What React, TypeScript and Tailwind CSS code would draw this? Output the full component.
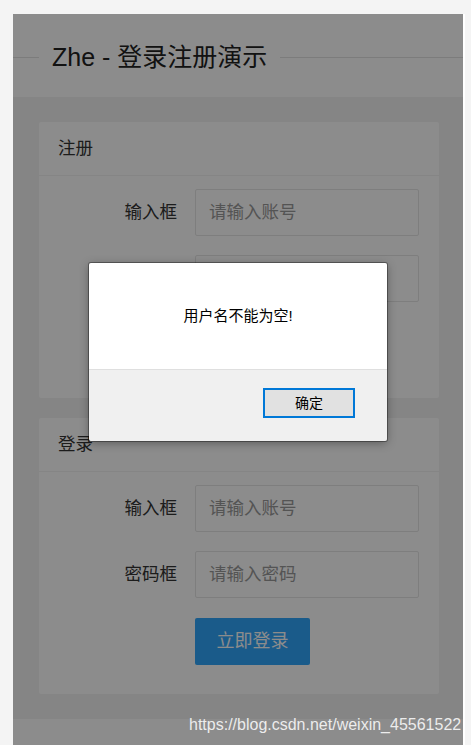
import React from "react";

const FONT = { fontFamily: '"Liberation Sans", "Noto Sans CJK SC", sans-serif' };

function Row({ label, placeholder }: { label: string; placeholder: string }) {
  return (
    <div className="flex items-center">
      <div className="w-[138px] text-right text-[17.5px] text-[#333]">{label}</div>
      <div className="ml-[18px] w-[224px] h-[47px] border border-[#e6e6e6] rounded-[2px] bg-white flex items-center pl-[13px] text-[17.5px] text-[#999]">
        {placeholder}
      </div>
    </div>
  );
}

function Card({ title, rows, button }: { title: string; rows: [string, string][]; button: string }) {
  return (
    <div className="w-[400px] ml-[26px] bg-white rounded-[2px] pb-[29px]">
      <div className="h-[54px] border-b border-[#f2f2f2] flex items-center px-[19px] text-[17.5px] text-[#333]">
        {title}
      </div>
      <div className="pt-[13px] flex flex-col gap-[19px]">
        {rows.map(([l, p]) => (
          <Row key={l + p} label={l} placeholder={p} />
        ))}
        <div className="flex mt-[1px]">
          <div className="ml-[156px] w-[115px] h-[47px] rounded-[2px] bg-[#30a6fc] text-white text-[18px] flex items-center justify-center">
            {button}
          </div>
        </div>
      </div>
    </div>
  );
}

export default function App() {
  return (
    <div className="relative w-[471px] h-[745px] overflow-hidden bg-[#f4f4f4] pt-[14px] pl-[13px]" style={FONT}>
      <div className="w-[452px] h-[731px] border-r-2 border-white">
        <div className="relative w-[450px] h-[731px] bg-white overflow-hidden">
          <div className="h-[83px] pt-[26px]">
            <div className="flex items-center h-[34px]">
              <div className="w-[26px] h-px bg-[#e2e2e2]" />
              <div className="px-[13px] text-[25px] leading-[34px] text-[#222] whitespace-nowrap">Zhe - 登录注册演示</div>
              <div className="flex-1 h-px bg-[#e2e2e2]" />
            </div>
          </div>
          <div className="bg-[#f2f2f2] pt-[25px] pb-[25px] flex flex-col gap-[20px]">
            <Card
              title="注册"
              rows={[
                ["输入框", "请输入账号"],
                ["密码框", "请输入密码"],
              ]}
              button="立即注册"
            />
            <Card
              title="登录"
              rows={[
                ["输入框", "请输入账号"],
                ["密码框", "请输入密码"],
              ]}
              button="立即登录"
            />
          </div>
          <div className="absolute inset-0 bg-[rgba(0,0,0,0.45)]" />
        </div>
      </div>

      <div className="absolute left-[89px] top-[263px] w-[298px] h-[178px] rounded-[2px] overflow-hidden shadow-[0_0_0_1px_rgba(0,0,0,0.35),0_2px_10px_rgba(0,0,0,0.35)] flex flex-col">
        <div className="h-[107px] bg-white border-b border-[#dfdfdf] flex items-center justify-center text-[15px] text-black">
          用户名不能为空!
        </div>
        <div className="flex-1 bg-[#f0f0f0] flex justify-end items-start pt-[18px] pr-[32px]">
          <div className="w-[92px] h-[30px] border-2 border-[#0078d7] bg-[#e1e1e1] flex items-center justify-center text-[14px] text-black">
            确定
          </div>
        </div>
      </div>

      <div className="absolute left-[189px] top-[715px] text-[16px] leading-[20px] text-[rgba(255,255,255,0.85)] whitespace-nowrap">
        https://blog.csdn.net/weixin_45561522
      </div>
    </div>
  );
}
